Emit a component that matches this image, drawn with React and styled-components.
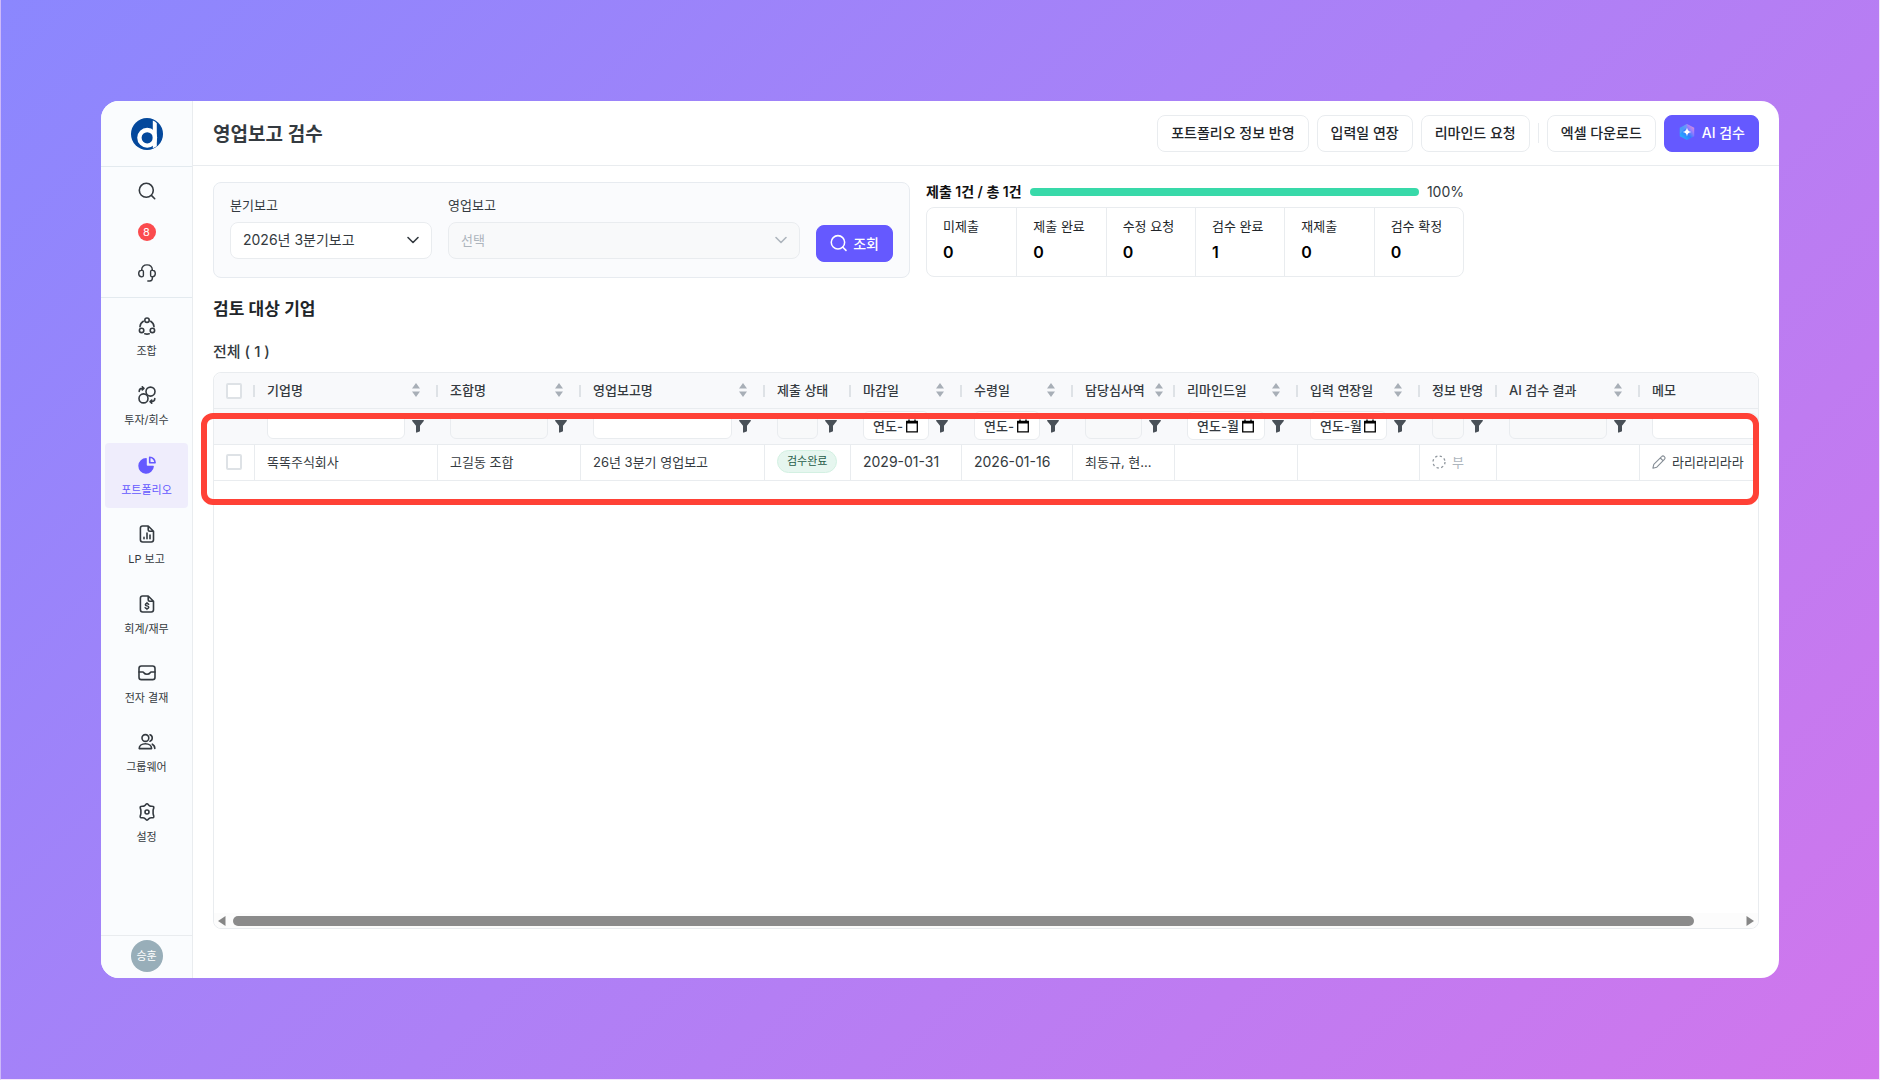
import { useState } from "react";
import styled, { createGlobalStyle, css } from "styled-components";

const GlobalStyle = createGlobalStyle`
  * {
    box-sizing: border-box;
  }

  body {
    margin: 0;
    font-family: Inter, "Noto Sans CJK KR", sans-serif;
    font-size: 13px;
    color: #343a40;
  }

  button,
  input,
  select {
    font: inherit;
    color: inherit;
  }
`;

const Line = "#e9ecef";
const Primary = "#6559ff";

const Page = styled.div`
  display: flex;
  min-height: 100vh;
  padding: 101px 100px 101px;
  border: solid #f3e4fb;
  border-width: 0 1px 1px;
  border-left-color: #cdb9f9;
  background: linear-gradient(135deg, #8b87fe 0%, #ad80f6 50%, #d176ec 100%);
`;

const Window = styled.div`
  display: flex;
  flex: 1;
  min-width: 0;
  overflow: hidden;
  border-radius: 18px;
  background: #fff;
`;

const Sidebar = styled.aside`
  display: flex;
  flex-direction: column;
  flex: none;
  width: 92px;
  background: #fafcfe;
  border-right: 1px solid ${Line};
`;

const LogoLink = styled.a`
  display: grid;
  place-items: center;
  height: 66px;
  border-bottom: 1px solid #e3eaef;
`;

const Tools = styled.div`
  display: flex;
  flex-direction: column;
  align-items: center;
  gap: 17px;
  padding: 12px 0;
  border-bottom: 1px solid #e3eaef;
`;

const ToolButton = styled.button`
  display: grid;
  place-items: center;
  width: 24px;
  height: 24px;
  padding: 0;
  border: 0;
  background: none;
`;

const Count = styled.span`
  display: grid;
  place-items: center;
  width: 18px;
  height: 18px;
  border-radius: 50%;
  background: #fb4b4e;
  color: #fff;
  font-size: 11px;
`;

const Nav = styled.nav`
  display: flex;
  flex-direction: column;
  flex: 0 1 551px;
  gap: 4px;
  margin: 6px 4px 0;
`;

const NavLink = styled.a`
  display: flex;
  flex: 1;
  flex-direction: column;
  align-items: center;
  gap: 8px;
  padding-top: 13px;
  border-radius: 4px;
  color: #343a40;
  font-size: 11px;
  line-height: 16px;
  text-decoration: none;
  ${({ $active }) =>
    $active &&
    css`
      background: #efedfc;
      color: ${Primary};
    `}
`;

const Profile = styled.div`
  display: grid;
  place-items: center;
  height: 43px;
  padding-bottom: 2px;
  margin-top: auto;
  border-top: 1px solid ${Line};
`;

const Avatar = styled.button`
  width: 32px;
  height: 32px;
  padding: 0 0 2px;
  border: 0;
  border-radius: 50%;
  background: #98aeb9;
  color: #fff;
  font-size: 11px;
`;

const Main = styled.main`
  display: flex;
  flex: 1;
  flex-direction: column;
  min-width: 0;
`;

const Header = styled.header`
  display: flex;
  align-items: center;
  justify-content: space-between;
  height: 65px;
  padding: 0 20px;
  border-bottom: 1px solid ${Line};
`;

const Title = styled.h1`
  margin: 0;
  padding-bottom: 2px;
  font-size: 19px;
  font-weight: 600;
`;

const Actions = styled.div`
  display: flex;
  align-items: center;
  gap: 8px;
`;

const Button = styled.button`
  display: flex;
  align-items: center;
  justify-content: center;
  gap: 6px;
  height: 37px;
  padding: 0 13px 2px;
  border: 1px solid ${({ $primary }) => ($primary ? Primary : Line)};
  border-radius: 8px;
  background: ${({ $primary }) => ($primary ? Primary : "#fff")};
  color: ${({ $primary }) => ($primary ? "#fff" : "#212529")};
  font-size: 14px;
  font-weight: 500;
  white-space: nowrap;
`;

const Divider = styled.span`
  width: 1px;
  height: 20px;
  background: ${Line};
`;

const Content = styled.div`
  display: flex;
  flex: 1;
  flex-direction: column;
  padding: 16px 20px 49px;
`;

const Summary = styled.div`
  display: flex;
  gap: 16px;
`;

const SearchForm = styled.form`
  display: flex;
  align-items: flex-start;
  gap: 16px;
  width: 697px;
  height: 96px;
  padding: 13px 16px 15px;
  border: 1px solid #e7ebf0;
  border-radius: 8px;
  background: #fafbfd;

  ${Button} {
    align-self: flex-end;
    width: 77px;
  }
`;

const Field = styled.div`
  display: flex;
  flex-direction: column;
  flex: ${({ $wide }) => ($wide ? "1" : "0 0 202px")};
  gap: 8px;

  label {
    line-height: 18px;
  }
`;

const SelectBox = styled.div`
  position: relative;
  color: ${({ $disabled }) => ($disabled ? "#adb5bd" : "#343a40")};

  select {
    width: 100%;
    height: 37px;
    padding: 0 12px 2px;
    appearance: none;
    border: 1px solid ${Line};
    border-radius: 8px;
    background: ${({ $disabled }) => ($disabled ? "#f8f9fa" : "#fff")};
    font-size: ${({ $disabled }) => ($disabled ? "13px" : "14px")};
    opacity: 1;
  }

  svg {
    position: absolute;
    top: 11px;
    right: 12px;
    pointer-events: none;
  }
`;

const Status = styled.section`
  display: flex;
  flex-direction: column;
  width: 538px;
`;

const Progress = styled.div`
  display: flex;
  align-items: center;
  gap: 8px;
  height: 20px;
  margin-bottom: 5px;
  font-size: 14px;
  line-height: 20px;
  white-space: nowrap;

  strong {
    color: #111;
    font-weight: 600;
  }
`;

const Bar = styled.div`
  flex: 1;
  height: 8px;
  overflow: hidden;
  border-radius: 4px;
  background: ${Line};

  div {
    height: 100%;
    background: #38d9a9;
  }
`;

const Stats = styled.dl`
  display: grid;
  grid-template-columns: repeat(6, 1fr);
  height: 70px;
  margin: 0;
  border: 1px solid ${Line};
  border-radius: 8px;
`;

const Stat = styled.div`
  padding: 9px 16px;
  border-left: 1px solid ${Line};

  &:first-child {
    border-left: 0;
  }

  dt {
    line-height: 18px;
    white-space: nowrap;
    color: #212529;
  }

  dd {
    margin: 7px 0 0;
    color: #000;
    font-size: 16px;
    font-weight: 600;
    line-height: 20px;
  }
`;

const SectionTitle = styled.h2`
  margin: 18px 0 0;
  color: #212529;
  font-size: 17px;
  font-weight: 600;
  line-height: 26px;
`;

const Total = styled.p`
  margin: 20px 0 10px;
  font-size: 15px;
  font-weight: 500;
  line-height: 20px;
`;

const Grid = styled.section`
  position: relative;
  display: flex;
  flex: 1;
  flex-direction: column;
  border: 1px solid ${Line};
  border-radius: 8px;
`;

const TableWrap = styled.div`
  overflow: hidden;
  border-radius: 8px 8px 0 0;
`;

const Table = styled.table`
  width: 100%;
  table-layout: fixed;
  border-collapse: separate;
  border-spacing: 0;

  th,
  td {
    height: 36px;
    padding: 0;
    border-bottom: 1px solid ${Line};
    text-align: left;
    white-space: nowrap;
  }

  thead th,
  thead td {
    background: #f8f9fb;
    font-weight: 500;
  }

  tbody td {
    padding-bottom: 2px;
    border-right: 1px solid ${Line};
  }

  tbody td:last-child {
    border-right: 0;
  }
`;

const HeadCell = styled.div`
  display: flex;
  align-items: center;
  height: 35px;
  background: ${({ $last }) =>
    $last
      ? "none"
      : "linear-gradient(#dee2e6, #dee2e6) right center / 2px 12px no-repeat"};
`;

const HeadText = styled.div`
  display: flex;
  align-items: center;
  justify-content: space-between;
  gap: 4px;
  flex: 1;
  min-width: 0;
  margin: 0 12px;
  padding-bottom: 2px;
  overflow: hidden;

  svg {
    flex: none;
  }
`;

const Cell = styled.div`
  display: flex;
  align-items: center;
  gap: 6px;
  padding: 0 12px;
  overflow: hidden;
  font-size: ${({ $number }) => ($number ? "14px" : "13px")};
  color: ${({ $muted }) => ($muted ? "#adb5bd" : "#343a40")};
`;

const Check = styled.input`
  display: block;
  width: 16px;
  height: 16px;
  margin: 0 0 0 12px;
  appearance: none;
  border: 2px solid #dee2e6;
  border-radius: 2px;
  background: #fff;

  &:checked {
    background: ${Primary};
  }
`;

const Filter = styled.div`
  display: flex;
  align-items: center;
  gap: 7px;
  padding: 0 ${({ $last }) => ($last ? "0" : "14px")} 2px 12px;
  overflow: hidden;

  & > svg {
    flex: none;
  }
`;

const FilterInput = styled.input`
  flex: 1;
  min-width: 0;
  height: 26px;
  padding: 0 8px;
  border: 1px solid ${Line};
  border-radius: 6px;
  background: ${({ disabled }) => (disabled ? "#f8f9fa" : "#fff")};
`;

const DateBox = styled.div`
  display: flex;
  align-items: center;
  flex: 1;
  min-width: 0;
  height: 29px;
  gap: 3px;
  padding: 0 10px 0 9px;
  border: 1px solid ${Line};
  border-radius: 6px;
  background: #fff;

  input {
    flex: 1;
    width: 0;
    min-width: 0;
    padding: 0;
    border: 0;
    background: none;
  }

  input::placeholder {
    color: #343a40;
    opacity: 1;
  }

  svg {
    flex: none;
  }
`;

const Badge = styled.span`
  padding: 0 9px;
  border: 1px solid #d3f0e2;
  border-radius: 12px;
  background: #e6f6ef;
  color: #285c49;
  font-size: 11px;
  line-height: 21px;
`;

const Highlight = styled.div`
  position: absolute;
  top: 40px;
  right: -1px;
  left: -13px;
  height: 92px;
  border: 6px solid #ff4136;
  border-radius: 12px;
  pointer-events: none;
`;

const ScrollBar = styled.div`
  display: flex;
  align-items: center;
  gap: 7px;
  height: 15px;
  margin-top: auto;
  padding: 0 4px;
  border-radius: 0 0 8px 8px;
  background: #fcfcfc;
`;

const Track = styled.div`
  flex: 1;
  height: 10px;

  div {
    height: 100%;
    border-radius: 5px;
    background: #8b8b8b;
  }
`;

const stroke = {
  fill: "none",
  stroke: "currentColor",
  strokeWidth: 1.6,
  strokeLinecap: "round",
  strokeLinejoin: "round",
};

const Icon = ({ children }) => (
  <svg width="18" height="18" viewBox="0 0 18 18" {...stroke} aria-hidden="true">
    {children}
  </svg>
);

const Logo = () => (
  <svg width="32" height="32" viewBox="0 0 32 32" aria-hidden="true">
    <circle cx="16" cy="16" r="16" fill="#04489c" />
    <circle cx="16.2" cy="19.8" r="7.800" fill="none" stroke="#fff" strokeWidth="4.4" />
    <path d="M21.8 2.6c1.600.6 2.800 1.400 4 2.600v23l-4 2z" fill="#fff" />
  </svg>
);

const SearchIcon = () => (
  <Icon>
    <circle cx="8.3" cy="8.3" r="7" />
    <path d="m13.4 13.4 3.3 3.3" />
  </Icon>
);

const HeadsetIcon = () => (
  <Icon>
    <g strokeWidth="1.4">
      <path d="M3.600 6.200C3.800 3 6 .9 9 .9s5.200 2.100 5.400 5.300" />
      <path d="M3.200 6.200c1.400-.3 2.200.4 2.200 1.600v3.400c0 1.200-.8 1.900-2.200 1.600C1.500 12.500.7 11.300.7 9.500s.8-3 2.500-3.300z" />
      <path d="M14.800 6.200c-1.400-.3-2.200.4-2.200 1.600v3.400c0 1.200.8 1.900 2.200 1.600 1.700-.3 2.500-1.500 2.500-3.300s-.8-3-2.500-3.300z" />
      <path d="M14.400 12.900v1c0 1.700-1 2.900-2.700 3.100H9.800" />
    </g>
  </Icon>
);

const FundIcon = () => (
  <Icon>
    <circle cx="9" cy="3.200" r="2.200" />
    <circle cx="3.600" cy="13.400" r="2.200" />
    <circle cx="14.400" cy="13.400" r="2.200" />
    <path d="M5.300 4.300C3.400 5.500 2.200 7.400 2 9.600M12.700 4.300c1.900 1.200 3.100 3.100 3.300 5.300M6.800 16.700c1.400.5 3 .5 4.400 0" />
  </Icon>
);

const InvestIcon = () => (
  <Icon>
    <circle cx="12.500" cy="5.600" r="4.500" />
    <circle cx="5.500" cy="12.400" r="4.500" />
    <path d="M1.200 5.400c0-1.800 1.200-3 3-3h1.500M4.300.8l1.600 1.600-1.600 1.600M16.800 12.600c0 1.800-1.200 3-3 3h-1.500M13.700 14l-1.600 1.600 1.600 1.600" />
  </Icon>
);

const PieIcon = () => (
  <Icon>
    <path
      d="M8.200 2.100a7.800 7.800 0 1 0 7.700 8.500.8.8 0 0 0-.8-.8H9.600a.8.8 0 0 1-.8-.8V2.900a.7.700 0 0 0-.6-.8z"
      fill="currentColor"
      stroke="none"
    />
    <path d="M11.700 1.200v5.500h5.400a5.500 5.500 0 0 0-5.400-5.500z" />
  </Icon>
);

const FileShape = () => (
  <path d="M4.600 1h5.600l5.300 5.300v8.500a2.200 2.200 0 0 1-2.200 2.200H4.600a2.200 2.200 0 0 1-2.200-2.200V3.200A2.200 2.200 0 0 1 4.600 1zM10.200 1v3.600a1.700 1.700 0 0 0 1.700 1.700h3.600" />
);

const ReportIcon = () => (
  <Icon>
    <FileShape />
    <path d="M6 12.400v1.300M9 8v5.700M12 10v3.700" />
  </Icon>
);

const MoneyIcon = () => (
  <Icon>
    <FileShape />
    <path
      d="M10.700 9.300c-.4-.6-1-.8-1.700-.8-1 0-1.700.5-1.700 1.200 0 1.700 3.500.7 3.500 2.500 0 .8-.8 1.300-1.800 1.300-.8 0-1.500-.3-1.900-.9M9 7.500v1M9 13.500v1"
      strokeWidth="1.400"
    />
  </Icon>
);

const InboxIcon = () => (
  <Icon>
    <rect x="1" y="2" width="16" height="13.600" rx="2.400" />
    <path d="M1 8h3.600c.8 0 1.100.4 1.500 1 .5.900 1.400 1.200 2.900 1.200s2.400-.3 2.900-1.200c.4-.6.7-1 1.500-1H17" />
  </Icon>
);

const UsersIcon = () => (
  <Icon>
    <circle cx="7.400" cy="5" r="3.400" />
    <path d="M1.200 15.600c0-2.600 2.500-4.800 6.200-4.800s6.200 2.200 6.200 4.800zM12 1.800a3.400 3.400 0 0 1 0 6.400M14.300 11.200c1.500.8 2.500 2.400 2.500 4.200" />
  </Icon>
);

const SettingIcon = () => (
  <Icon>
    <path d="M9 .8c1.200 0 1.700 1.800 2.800 2.200 1.200.5 3.200-.2 3.900.8.600 1-.6 2.400-.6 3.600v3.200c0 1.200 1.200 2.600.6 3.600-.7 1-2.700.3-3.900.8-1.100.4-1.600 2.200-2.800 2.200s-1.700-1.800-2.800-2.200c-1.200-.5-3.200.2-3.900-.8-.6-1 .6-2.400.6-3.600V7.400c0-1.200-1.200-2.600-.6-3.600.7-1 2.700-.3 3.900-.8C7.300 2.600 7.800.8 9 .8z" />
    <circle cx="9" cy="9" r="2" />
  </Icon>
);

const AiIcon = () => (
  <svg width="18" height="18" viewBox="0 0 18 18" aria-hidden="true">
    <defs>
      <linearGradient id="ai" x1="0" y1="1" x2="1" y2="0">
        <stop offset="0" stopColor="#25c3ff" />
        <stop offset="0.45" stopColor="#2f7dff" />
        <stop offset="0.7" stopColor="#9b7bff" />
        <stop offset="1" stopColor="#ff9ac0" />
      </linearGradient>
    </defs>
    <path d="m9 1 7.200 3.800v8.400L9 17l-7.200-3.800V4.800z" fill="url(#ai)" />
    <path d="M1.800 4.800 9 1v3L5 8l-3.200 3z" fill="#5fa8f5" opacity="0.6" />
    <path d="M9 4.600c.5 2.800 1.600 3.900 4.400 4.400-2.800.5-3.900 1.600-4.400 4.400-.5-2.800-1.600-3.900-4.400-4.400 2.800-.5 3.900-1.600 4.400-4.400z" fill="#fff" />
  </svg>
);

const Chevron = () => (
  <svg width="14" height="14" viewBox="0 0 14 14" {...stroke} aria-hidden="true">
    <path d="m2 4.500 5 5 5-5" />
  </svg>
);

const SortIcon = () => (
  <svg width="20" height="14" viewBox="0 0 20 14" fill="#a8afb7" aria-hidden="true">
    <path d="m10 0 4 5.500H6zM10 14 6 8.500h8z" />
  </svg>
);

const FunnelIcon = () => (
  <svg width="12" height="14" viewBox="0 0 12 14" fill="#495057" aria-hidden="true">
    <path d="M.6 1h10.800c.5 0 .7.600.4 1L8 6.800V12c0 .3-.2.500-.4.600l-2.700 1c-.4.100-.9-.1-.9-.6V6.800L.2 2C-.1 1.600.1 1 .6 1z" />
  </svg>
);

const CalendarIcon = () => (
  <svg width="12" height="14" viewBox="0 0 12 14" aria-hidden="true">
    <path d="M.7 3h10.600v9.800H.7z" fill="none" stroke="#000" strokeWidth="1.300" />
    <path d="M.1 1.800h11.800v2.800H.1zM2.300.4h1.400v2H2.300zM8.300.4h1.400v2H8.300z" />
  </svg>
);

const PendingIcon = () => (
  <svg width="14" height="14" viewBox="0 0 14 14" fill="none" stroke="#8f969d" aria-hidden="true">
    <circle cx="7" cy="7" r="6" strokeWidth="1.300" strokeDasharray="2.300 2.412" />
  </svg>
);

const PencilIcon = () => (
  <svg width="14" height="14" viewBox="0 0 14 14" {...stroke} stroke="#868e96" strokeWidth="1.100" aria-hidden="true">
    <path d="M9.600 1.600a1.900 1.900 0 0 1 2.800 2.700l-7.600 7.900-3.900 1 .9-3.900zM8.300 3l2.700 2.700" />
  </svg>
);

const Arrow = ({ flip }) => (
  <svg width="8" height="10" viewBox="0 0 8 10" fill="#868686" aria-hidden="true">
    <path d={flip ? "M.5 0v10L8 5z" : "M7.500 0v10L0 5z"} />
  </svg>
);

const menus = [
  { name: "조합", icon: FundIcon },
  { name: "투자/회수", icon: InvestIcon },
  { name: "포트폴리오", icon: PieIcon },
  { name: "LP 보고", icon: ReportIcon },
  { name: "회계/재무", icon: MoneyIcon },
  { name: "전자 결재", icon: InboxIcon },
  { name: "그룹웨어", icon: UsersIcon },
  { name: "설정", icon: SettingIcon },
];

const stats = [
  ["미제출", 0],
  ["제출 완료", 0],
  ["수정 요청", 0],
  ["검수 완료", 1],
  ["재제출", 0],
  ["검수 확정", 0],
];

const columns = [
  { name: "기업명", width: 183, sort: true, filter: "text" },
  { name: "조합명", width: 143, sort: true, filter: "none" },
  { name: "영업보고명", width: 184, sort: true, filter: "text" },
  { name: "제출 상태", width: 86, filter: "none" },
  { name: "마감일", width: 111, sort: true, filter: "date" },
  { name: "수령일", width: 111, sort: true, filter: "date" },
  { name: "담당심사역", width: 102, sort: true, filter: "none" },
  { name: "리마인드일", width: 123, sort: true, filter: "date" },
  { name: "입력 연장일", width: 122, sort: true, filter: "date" },
  { name: "정보 반영", width: 77, filter: "none" },
  { name: "AI 검수 결과", width: 143, sort: true, filter: "none" },
  { name: "메모", filter: "text", last: true },
];

const ColumnFilter = ({ column }) => (
  <Filter $last={column.last}>
    {column.filter === "date" ? (
      <DateBox>
        <input aria-label={column.name} placeholder="연도-월-일" />
        <CalendarIcon />
      </DateBox>
    ) : (
      <FilterInput aria-label={column.name} disabled={column.filter === "none"} />
    )}
    {!column.last && <FunnelIcon />}
  </Filter>
);

const ReportTable = () => (
  <TableWrap>
    <Table>
      <colgroup>
        <col style={{ width: 41 }} />
        {columns.map((column) => (
          <col key={column.name} style={{ width: column.width }} />
        ))}
      </colgroup>
      <thead>
        <tr>
          <th>
            <HeadCell>
              <Check type="checkbox" aria-label="전체 선택" />
            </HeadCell>
          </th>
          {columns.map((column) => (
            <th key={column.name}>
              <HeadCell $last={column.last}>
                <HeadText>
                  {column.name}
                  {column.sort && <SortIcon />}
                </HeadText>
              </HeadCell>
            </th>
          ))}
        </tr>
        <tr>
          <td />
          {columns.map((column) => (
            <td key={column.name}>
              <ColumnFilter column={column} />
            </td>
          ))}
        </tr>
      </thead>
      <tbody>
        <tr>
          <td>
            <Check type="checkbox" aria-label="똑똑주식회사 선택" />
          </td>
          <td>
            <Cell>똑똑주식회사</Cell>
          </td>
          <td>
            <Cell>고길동 조합</Cell>
          </td>
          <td>
            <Cell>26년 3분기 영업보고</Cell>
          </td>
          <td>
            <Cell>
              <Badge>검수완료</Badge>
            </Cell>
          </td>
          <td>
            <Cell $number>2029-01-31</Cell>
          </td>
          <td>
            <Cell $number>2026-01-16</Cell>
          </td>
          <td>
            <Cell>최동규, 현...</Cell>
          </td>
          <td />
          <td />
          <td>
            <Cell $muted>
              <PendingIcon />부
            </Cell>
          </td>
          <td />
          <td>
            <Cell>
              <PencilIcon />
              라리라리라라
            </Cell>
          </td>
        </tr>
      </tbody>
    </Table>
  </TableWrap>
);

const App = () => {
  const [active, setActive] = useState("포트폴리오");

  return (
    <Page>
      <GlobalStyle />
      <Window>
        <Sidebar>
          <LogoLink href="#" aria-label="홈">
            <Logo />
          </LogoLink>
          <Tools>
            <ToolButton aria-label="검색">
              <SearchIcon />
            </ToolButton>
            <ToolButton aria-label="알림">
              <Count>8</Count>
            </ToolButton>
            <ToolButton aria-label="고객센터">
              <HeadsetIcon />
            </ToolButton>
          </Tools>
          <Nav>
            {menus.map(({ name, icon: MenuIcon }) => (
              <NavLink
                key={name}
                href="#"
                $active={name === active}
                onClick={() => setActive(name)}>
                <MenuIcon />
                {name}
              </NavLink>
            ))}
          </Nav>
          <Profile>
            <Avatar>승훈</Avatar>
          </Profile>
        </Sidebar>
        <Main>
          <Header>
            <Title>영업보고 검수</Title>
            <Actions>
              <Button>포트폴리오 정보 반영</Button>
              <Button>입력일 연장</Button>
              <Button>리마인드 요청</Button>
              <Divider />
              <Button>엑셀 다운로드</Button>
              <Button $primary>
                <AiIcon />
                AI 검수
              </Button>
            </Actions>
          </Header>
          <Content>
            <Summary>
              <SearchForm onSubmit={(e) => e.preventDefault()}>
                <Field>
                  <label htmlFor="quarter">분기보고</label>
                  <SelectBox>
                    <select id="quarter">
                      <option>2026년 3분기보고</option>
                    </select>
                    <Chevron />
                  </SelectBox>
                </Field>
                <Field $wide>
                  <label htmlFor="report">영업보고</label>
                  <SelectBox $disabled>
                    <select id="report" disabled>
                      <option>선택</option>
                    </select>
                    <Chevron />
                  </SelectBox>
                </Field>
                <Button $primary type="submit">
                  <SearchIcon />
                  조회
                </Button>
              </SearchForm>
              <Status>
                <Progress>
                  <strong>제출 1건 / 총 1건</strong>
                  <Bar>
                    <div style={{ width: "100%" }} />
                  </Bar>
                  <span>100%</span>
                </Progress>
                <Stats>
                  {stats.map(([label, value]) => (
                    <Stat key={label}>
                      <dt>{label}</dt>
                      <dd>{value}</dd>
                    </Stat>
                  ))}
                </Stats>
              </Status>
            </Summary>
            <SectionTitle>검토 대상 기업</SectionTitle>
            <Total>전체 ( 1 )</Total>
            <Grid>
              <ReportTable />
              <ScrollBar>
                <Arrow />
                <Track>
                  <div style={{ width: "97%" }} />
                </Track>
                <Arrow flip />
              </ScrollBar>
              <Highlight />
            </Grid>
          </Content>
        </Main>
      </Window>
    </Page>
  );
};

export default App;
